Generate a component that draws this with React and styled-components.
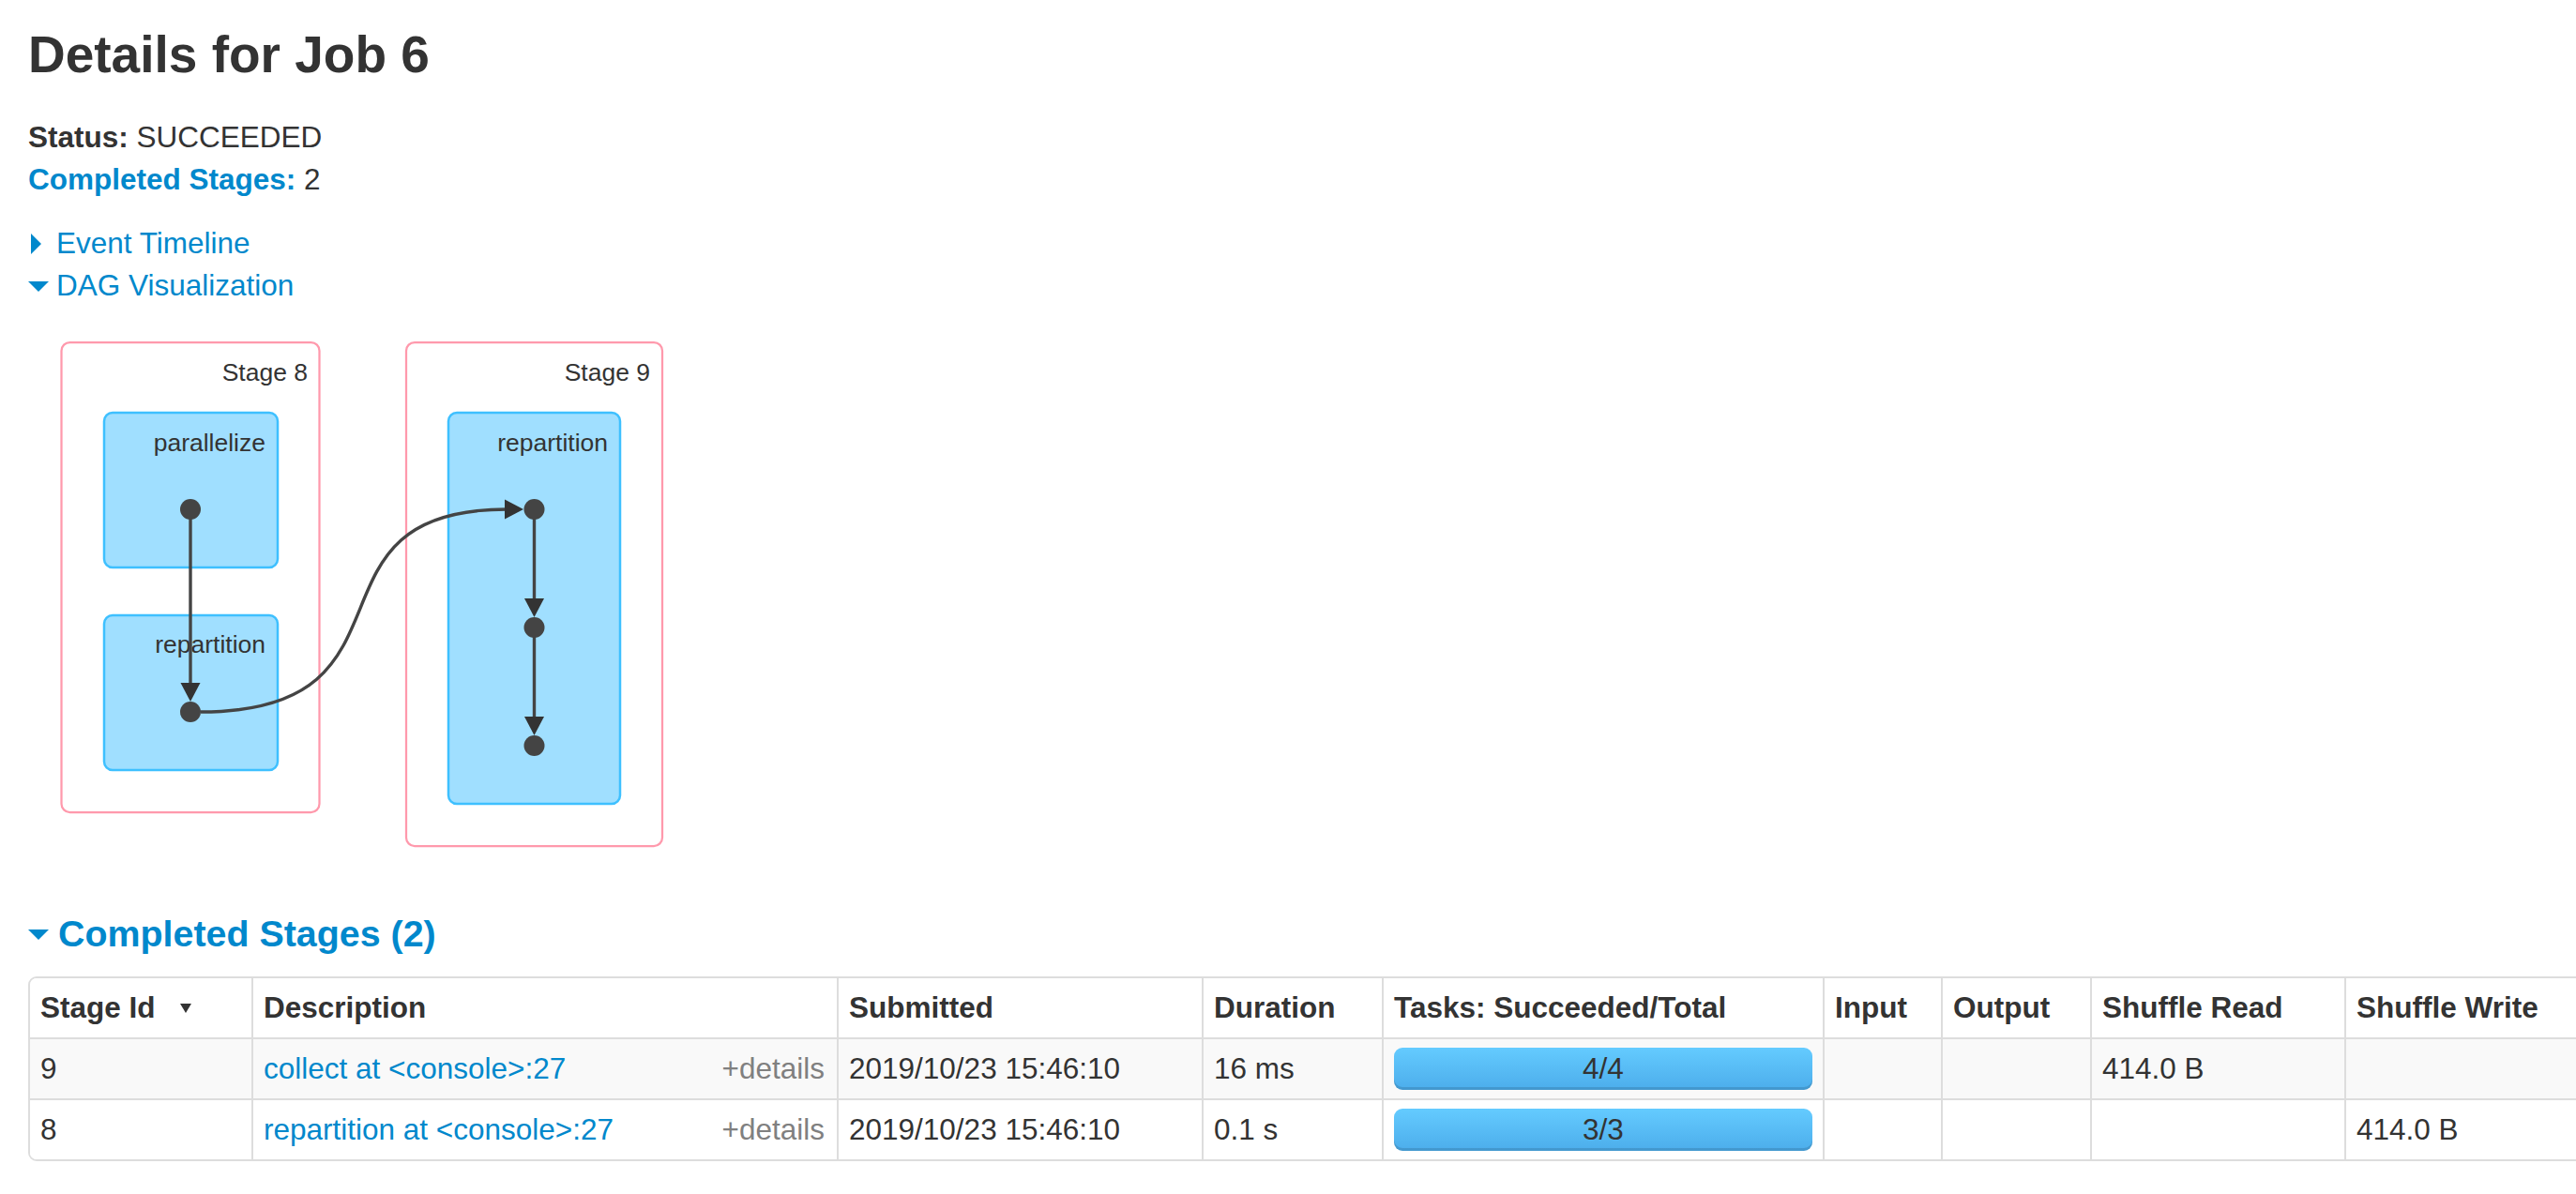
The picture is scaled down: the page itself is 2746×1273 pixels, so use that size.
import React from 'react';
import styled, { createGlobalStyle } from 'styled-components';

const GlobalStyle = createGlobalStyle`
  html, body {
    margin: 0;
    padding: 0;
    background: #fff;
    overflow: hidden;
  }
  body {
    font-family: "Liberation Sans", Arial, Helvetica, sans-serif;
    font-size: 31.5px;
    line-height: 45px;
    color: #333;
  }
`;

const Page = styled.div`
  padding-left: 30px;
`;

const Title = styled.h3`
  margin: 13px 0 0;
  font-size: 55px;
  line-height: 90px;
  font-weight: bold;
  color: #333;
`;

const Summary = styled.ul`
  list-style: none;
  margin: 21px 0 0;
  padding: 0;
  li {
    height: 45px;
  }
  strong {
    font-weight: bold;
  }
  a {
    color: #0088cc;
    text-decoration: none;
  }
`;

const Toggles = styled.div`
  margin-top: 23px;
`;

const ToggleRow = styled.div`
  display: flex;
  align-items: center;
  height: 45px;
  color: #0088cc;
`;

const ArrowSlot = styled.span`
  width: ${p => p.w || 30}px;
  flex: none;
  display: flex;
  align-items: center;
`;

const Arrow = styled.span`
  display: inline-block;
  width: 0;
  height: 0;
  ${p => p.open ? `
    border-left: 11px solid transparent;
    border-right: 11px solid transparent;
    border-top: 11px solid #0088cc;
    margin-top: 2px;
  ` : `
    margin-left: 3px;
    border-top: 11px solid transparent;
    border-bottom: 11px solid transparent;
    border-left: 11px solid #0088cc;
  `}
`;

const Dag = styled.svg`
  display: block;
  margin-top: 13px;
  text {
    font-family: "Liberation Sans", Arial, sans-serif;
    font-size: 26.5px;
    fill: #333;
  }
`;

const SectionTitle = styled.h4`
  margin: 53px 0 0;
  display: flex;
  align-items: center;
  font-size: 39.4px;
  line-height: 45px;
  font-weight: bold;
  color: #0088cc;
`;

const Table = styled.div`
  margin-top: 23px;
  display: grid;
  grid-template-columns: 236px 624px 389px 192px 470px 126px 159px 271px 291px;
  width: max-content;
  border: 2px solid #ddd;
  border-radius: 9px 0 0 9px;
  overflow: hidden;
`;

const Cell = styled.div`
  box-sizing: border-box;
  height: ${p => (p.head ? 63 : 65)}px;
  padding: 9px 11px;
  border-top: ${p => (p.head ? 'none' : '2px solid #ddd')};
  border-left: ${p => (p.first ? 'none' : '2px solid #ddd')};
  background: ${p => (p.striped ? '#f9f9f9' : '#fff')};
  font-weight: ${p => (p.head ? 'bold' : 'normal')};
  white-space: nowrap;
  display: flex;
  align-items: center;
  justify-content: ${p => (p.spread ? 'space-between' : 'flex-start')};
`;

const SortArrow = styled.span`
  display: inline-block;
  width: 0;
  height: 0;
  margin-left: 26px;
  border-left: 6px solid transparent;
  border-right: 6px solid transparent;
  border-top: 10px solid #333;
`;

const Link = styled.a`
  color: #0088cc;
  text-decoration: none;
`;

const Details = styled.span`
  color: grey;
  margin-right: 2px;
`;

const Progress = styled.div`
  flex: 1;
  height: 45px;
  border-radius: 9px;
  background-image: linear-gradient(to bottom, #64cbff, #4cadeb);
  box-shadow: inset 0 -3px 0 rgba(0, 0, 0, 0.12);
  text-align: center;
  line-height: 45px;
  color: #333;
`;

const headers = ['Stage Id', 'Description', 'Submitted', 'Duration', 'Tasks: Succeeded/Total', 'Input', 'Output', 'Shuffle Read', 'Shuffle Write'];

const stages = [
  { id: 9, desc: 'collect at <console>:27', submitted: '2019/10/23 15:46:10', duration: '16 ms', tasks: '4/4', read: '414.0 B', write: '' },
  { id: 8, desc: 'repartition at <console>:27', submitted: '2019/10/23 15:46:10', duration: '0.1 s', tasks: '3/3', read: '', write: '414.0 B' },
];

const Node = ({ cx, cy }) => <circle cx={cx} cy={cy} r="11" fill="#444" />;

const DownArrow = ({ x, y }) => (
  <polygon points={`${x - 10.5},${y - 20} ${x + 10.5},${y - 20} ${x},${y}`} fill="#333" />
);

function DagViz() {
  const stageRect = { fill: '#fff', stroke: '#ff99ac', strokeWidth: 2.25 };
  const rddRect = { fill: '#a0dfff', stroke: '#3ec0ff', strokeWidth: 2.5 };
  const edge = { stroke: '#444', strokeWidth: 3.4, fill: 'none' };
  return (
    <Dag width="700" height="580" viewBox="30 340 700 580">
      <rect x="65.5" y="365" width="275" height="501" rx="9" style={stageRect} />
      <text x="328" y="406" textAnchor="end">Stage 8</text>
      <rect x="111" y="440" width="185" height="165" rx="9" style={rddRect} />
      <text x="283" y="481" textAnchor="end">parallelize</text>
      <rect x="111" y="656" width="185" height="165" rx="9" style={rddRect} />
      <text x="283" y="696" textAnchor="end">repartition</text>

      <rect x="433" y="365" width="273" height="537" rx="9" style={stageRect} />
      <text x="693" y="406" textAnchor="end">Stage 9</text>
      <rect x="478" y="440" width="183" height="417" rx="9" style={rddRect} />
      <text x="648" y="481" textAnchor="end">repartition</text>

      <line x1="203" y1="543" x2="203" y2="730" style={edge} />
      <DownArrow x={203} y={748} />
      <path d="M 214 759 C 460 759, 310 543, 540 543" style={edge} />
      <polygon points="538,532.5 538,553.5 558,543" fill="#333" />

      <line x1="569.5" y1="543" x2="569.5" y2="640" style={edge} />
      <DownArrow x={569.5} y={658} />
      <line x1="569.5" y1="669" x2="569.5" y2="766" style={edge} />
      <DownArrow x={569.5} y={784} />

      <Node cx={203} cy={543} />
      <Node cx={203} cy={759} />
      <Node cx={569.5} cy={543} />
      <Node cx={569.5} cy={669} />
      <Node cx={569.5} cy={795} />
    </Dag>
  );
}

export default function App() {
  return (
    <Page>
      <GlobalStyle />
      <Title>Details for Job 6</Title>
      <Summary>
        <li><strong>Status:</strong> SUCCEEDED</li>
        <li><a href="#completed"><strong>Completed Stages:</strong></a> 2</li>
      </Summary>
      <Toggles>
        <ToggleRow>
          <ArrowSlot><Arrow /></ArrowSlot>
          <span>Event Timeline</span>
        </ToggleRow>
        <ToggleRow>
          <ArrowSlot><Arrow open /></ArrowSlot>
          <span>DAG Visualization</span>
        </ToggleRow>
      </Toggles>
      <DagViz />
      <SectionTitle>
        <ArrowSlot w={32}><Arrow open /></ArrowSlot>
        Completed Stages (2)
      </SectionTitle>
      <Table>
        {headers.map((h, i) => (
          <Cell head first={i === 0} key={h}>
            {h}
            {i === 0 && <SortArrow />}
          </Cell>
        ))}
        {stages.map((s, r) => {
          const striped = r === 0;
          return (
            <React.Fragment key={s.id}>
              <Cell first striped={striped}>{s.id}</Cell>
              <Cell spread striped={striped}>
                <Link href="#">{s.desc}</Link>
                <Details>+details</Details>
              </Cell>
              <Cell striped={striped}>{s.submitted}</Cell>
              <Cell striped={striped}>{s.duration}</Cell>
              <Cell striped={striped}><Progress>{s.tasks}</Progress></Cell>
              <Cell striped={striped} />
              <Cell striped={striped} />
              <Cell striped={striped}>{s.read}</Cell>
              <Cell striped={striped}>{s.write}</Cell>
            </React.Fragment>
          );
        })}
      </Table>
    </Page>
  );
}
